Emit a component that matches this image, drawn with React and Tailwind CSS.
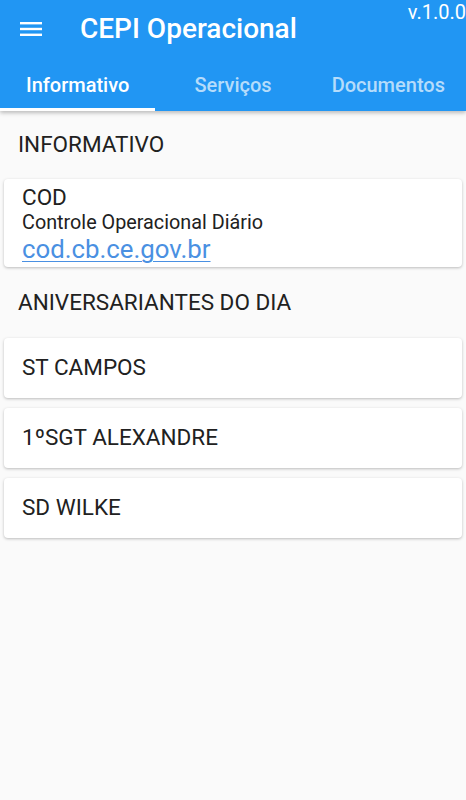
import React from 'react';

const aniversariantes = ['ST CAMPOS', '1ºSGT ALEXANDRE', 'SD WILKE'];

function MenuIcon() {
  return (
    <svg width="22" height="16" viewBox="0 0 22 16" className="block">
      <rect x="0" y="1" width="22" height="2.4" fill="white" />
      <rect x="0" y="6.8" width="22" height="2.4" fill="white" />
      <rect x="0" y="12.6" width="22" height="2.4" fill="white" />
    </svg>
  );
}

export default function App() {
  return (
    <div className="min-h-[800px] bg-[#fafafa] font-['Roboto',sans-serif]">
      <header className="relative bg-[#2196f3] shadow-[0_2px_4px_rgba(0,0,0,0.25)]">
        <div className="h-[58px] flex items-center pl-[20px]">
          <MenuIcon />
          <h1 className="ml-[38px] text-[28px] font-medium text-white leading-none">CEPI Operacional</h1>
        </div>
        <span className="absolute right-0 top-0 text-[20px] text-white leading-tight">v.1.0.0</span>
        <nav className="grid grid-cols-3 h-[53px]">
          <div className="relative flex items-center justify-center pt-[1px] text-[20px] font-medium text-white">
            Informativo
            <span className="absolute left-0 right-0 bottom-0 h-[3px] bg-white" />
          </div>
          <div className="flex items-center justify-center pt-[1px] text-[20px] font-medium text-[#b5dcfb]">Serviços</div>
          <div className="flex items-center justify-center pt-[1px] text-[20px] font-medium text-[#b5dcfb]">Documentos</div>
        </nav>
      </header>

      <main className="px-[4px] pt-[19px]">
        <h2 className="px-[14px] text-[22.5px] text-[#212121] leading-[28px]">INFORMATIVO</h2>
        <div className="mt-[21px] bg-white rounded-[4px] shadow-[0_1px_3px_rgba(0,0,0,0.25)] h-[88px] pl-[18px] pt-[5px]">
          <p className="text-[22.5px] text-[#212121] leading-[27px]">COD</p>
          <p className="text-[19.8px] text-[#212121] leading-[23px]">Controle Operacional Diário</p>
          <a href="#" className="text-[25.8px] text-[#4a90e2] underline underline-offset-[3px] decoration-1 leading-[30px]">
            cod.cb.ce.gov.br
          </a>
        </div>

        <h2 className="mt-[21px] px-[14px] text-[22.5px] text-[#212121] leading-[28px]">ANIVERSARIANTES DO DIA</h2>
        <div className="mt-[22px] flex flex-col gap-[10px]">
          {aniversariantes.map(nome => (
            <div key={nome} className="h-[60px] bg-white rounded-[4px] shadow-[0_1px_3px_rgba(0,0,0,0.25)] flex items-center pl-[18px]">
              <span className="text-[22.5px] text-[#212121]">{nome}</span>
            </div>
          ))}
        </div>
      </main>
    </div>
  );
}
